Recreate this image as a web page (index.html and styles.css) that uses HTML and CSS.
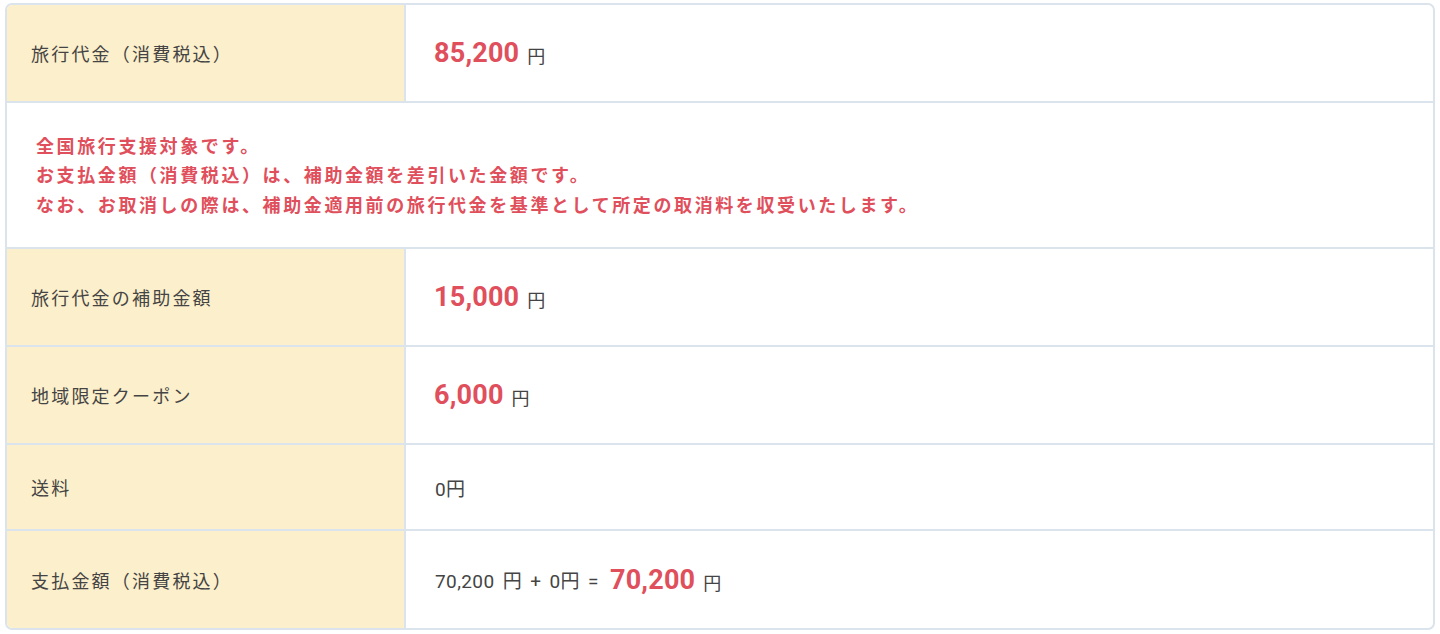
FILE: index.html
```html
<!DOCTYPE html>
<html lang="ja">
<head>
<meta charset="utf-8">
<link rel="stylesheet" href="styles.css">
</head>
<body>
<div class="price-table">
  <div class="row">
    <div class="label">旅行代金（消費税込）</div>
    <div class="value"><span class="amount">85,200</span><span class="yen">円</span></div>
  </div>
  <div class="row note-row">
    <div class="note">
      <p>全国旅行支援対象です。</p>
      <p>お支払金額（消費税込）は、補助金額を差引いた金額です。</p>
      <p>なお、お取消しの際は、補助金適用前の旅行代金を基準として所定の取消料を収受いたします。</p>
    </div>
  </div>
  <div class="row">
    <div class="label">旅行代金の補助金額</div>
    <div class="value"><span class="amount">15,000</span><span class="yen">円</span></div>
  </div>
  <div class="row">
    <div class="label">地域限定クーポン</div>
    <div class="value"><span class="amount">6,000</span><span class="yen">円</span></div>
  </div>
  <div class="row small">
    <div class="label">送料</div>
    <div class="value plain">0円</div>
  </div>
  <div class="row last">
    <div class="label">支払金額（消費税込）</div>
    <div class="value plain">70,200 円 + 0円 = <span class="amount">70,200</span><span class="yen">円</span></div>
  </div>
</div>
</body>
</html>
```

FILE: styles.css
```css
html, body {
  margin: 0;
  padding: 0;
  background: #ffffff;
}
body {
  font-family: Roboto, "Noto Sans CJK JP", sans-serif;
  color: #444444;
}
.price-table {
  margin: 3px 5px 4px 5px;
  border: 2px solid #dbe3ec;
  border-radius: 7px;
  overflow: hidden;
  height: 627px;
  box-sizing: border-box;
  display: flex;
  flex-direction: column;
}
.row {
  display: grid;
  grid-template-columns: 399px 1fr;
  border-bottom: 2px solid #dbe3ec;
  height: 96px;
  box-sizing: content-box;
}
.row.small { height: 84px; }
.row.last { border-bottom: none; flex: 1; height: auto; }
.note-row {
  grid-template-columns: 1fr;
  height: 144px;
}
.label {
  background: #fcefcb;
  border-right: 2px solid #dbe3ec;
  display: flex;
  align-items: center;
  padding-left: 24px;
  font-family: "Noto Sans CJK JP", sans-serif;
  font-size: 18px;
  letter-spacing: 2.2px;
  color: #444444;
}
.value {
  display: flex;
  align-items: center;
  padding-left: 28px;
  font-size: 17px;
}
.value.plain {
  font-family: Roboto, "Noto Sans CJK JP", sans-serif;
  font-size: 19px;
  letter-spacing: 0.4px;
  word-spacing: 3px;
  color: #444444;
  padding-left: 29px;
  white-space: pre;
}
.value.plain .amount { margin-left: 3px; }
.amount {
  font-family: Roboto, sans-serif;
  font-weight: 700;
  font-size: 27px;
  color: #df4f5c;
  letter-spacing: 0.2px;
  word-spacing: 0;
}
.yen {
  font-family: "Noto Sans CJK JP", sans-serif;
  font-size: 18px;
  letter-spacing: 0;
  color: #444444;
  margin-left: 8px;
  padding-top: 4px;
}
.note {
  display: flex;
  flex-direction: column;
  justify-content: center;
  padding-left: 29px;
}
.note p {
  margin: 0;
  font-family: "Noto Sans CJK JP", sans-serif;
  font-weight: 700;
  font-size: 18px;
  line-height: 29.5px;
  letter-spacing: 2.6px;
  color: #df4f5c;
}
```
